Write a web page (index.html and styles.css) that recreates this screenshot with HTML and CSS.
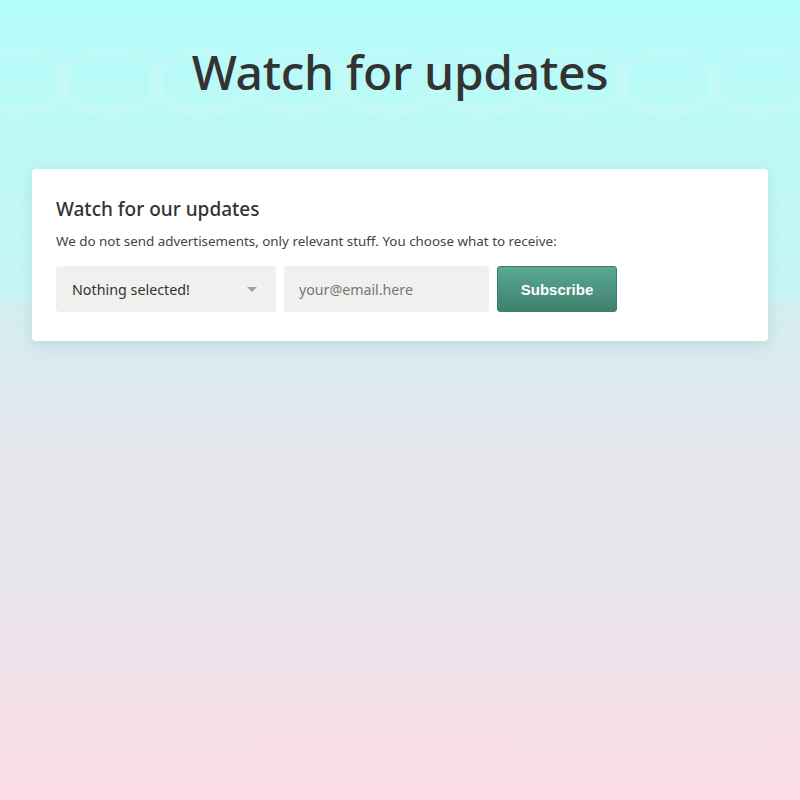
FILE: index.html
```html
<!DOCTYPE html>
<html lang="en">
<head>
<meta charset="utf-8">
<title>Watch for updates</title>
<link rel="stylesheet" href="styles.css">
</head>
<body>
<div class="page">
  <header class="hero">
    <svg class="waves" width="800" height="80" viewBox="0 0 800 80" aria-hidden="true">
      <g fill="none" stroke="#ffffff" stroke-opacity="0.09" stroke-width="12">
        <ellipse cx="17" cy="40" rx="48" ry="30"/>
        <ellipse cx="110" cy="40" rx="48" ry="30"/>
        <ellipse cx="203" cy="40" rx="48" ry="30"/>
        <ellipse cx="296" cy="40" rx="48" ry="30"/>
        <ellipse cx="389" cy="40" rx="48" ry="30"/>
        <ellipse cx="482" cy="40" rx="48" ry="30"/>
        <ellipse cx="575" cy="40" rx="48" ry="30"/>
        <ellipse cx="668" cy="40" rx="48" ry="30"/>
        <ellipse cx="761" cy="40" rx="48" ry="30"/>
      </g>
    </svg>
    <h1 class="title">Watch for updates</h1>
  </header>
  <main class="content">
    <section class="card">
      <h2 class="card-title">Watch for our updates</h2>
      <p class="card-text">We do not send advertisements, only relevant stuff. You choose what to receive:</p>
      <form class="form-row">
        <div class="select">
          <span class="select-label">Nothing selected!</span>
          <span class="caret"></span>
        </div>
        <input class="email" type="email" placeholder="your@email.here">
        <button class="btn" type="button">Subscribe</button>
      </form>
    </section>
  </main>
</div>
</body>
</html>
```

FILE: styles.css
```css
* { box-sizing: border-box; }
html, body { margin: 0; padding: 0; }
body {
  font-family: "Noto Sans", "Open Sans", sans-serif;
  color: #333;
  background: linear-gradient(to bottom, #d3eef0 300px, #e4e6ec 450px, #e9e4ec 600px, #fcdbe3 800px);
  min-height: 800px;
}
.page { position: relative; min-height: 800px; }
.hero {
  position: relative;
  height: 301px;
  background: linear-gradient(to bottom, #b3fcf8 0px, #c8f5f5 301px);
  padding-top: 40px;
  text-align: center;
}
.waves { position: absolute; left: 0; top: 42px; }
.title {
  position: relative;
  margin: 0;
  font-size: 48px;
  font-weight: 500;
  line-height: 64px;
  letter-spacing: -0.3px;
  color: #333;
}
.content {
  margin-top: -132px;
  padding: 0 32px;
  position: relative;
}
.card {
  background: #fff;
  border-radius: 4px;
  box-shadow: 0 4px 14px rgba(70, 130, 140, 0.18);
  padding: 28px 24px 29px;
}
.card-title {
  margin: 0;
  font-size: 19px;
  font-weight: 500;
  line-height: 24px;
  color: #333;
}
.card-text {
  margin: 10px 0 15px;
  font-size: 13.4px;
  line-height: 20px;
  color: #444;
}
.form-row { display: flex; gap: 8px; margin: 0; }
.select {
  width: 220px;
  height: 46px;
  background: #f0f0ee;
  border-radius: 4px;
  display: flex;
  align-items: center;
  justify-content: space-between;
  padding: 0 19px 0 16px;
  font-size: 14.3px;
  color: #333;
}
.caret {
  width: 0; height: 0;
  border-left: 5px solid transparent;
  border-right: 5px solid transparent;
  border-top: 5px solid #8fa89f;
}
.email {
  width: 205px;
  height: 46px;
  border: 0;
  background: #f0f0ee;
  border-radius: 4px;
  padding: 0 15px;
  font-family: inherit;
  font-size: 14.2px;
  color: #333;
  outline: none;
}
.email::placeholder { color: #777; }
.btn {
  width: 120px;
  height: 46px;
  border: 1px solid #3d7d6c;
  border-radius: 3px;
  background: linear-gradient(to bottom, #5aa994, #3f806f);
  color: #fff;
  font-family: "Liberation Sans", Arial, sans-serif;
  font-weight: bold;
  font-size: 15px;
  cursor: pointer;
}
```
